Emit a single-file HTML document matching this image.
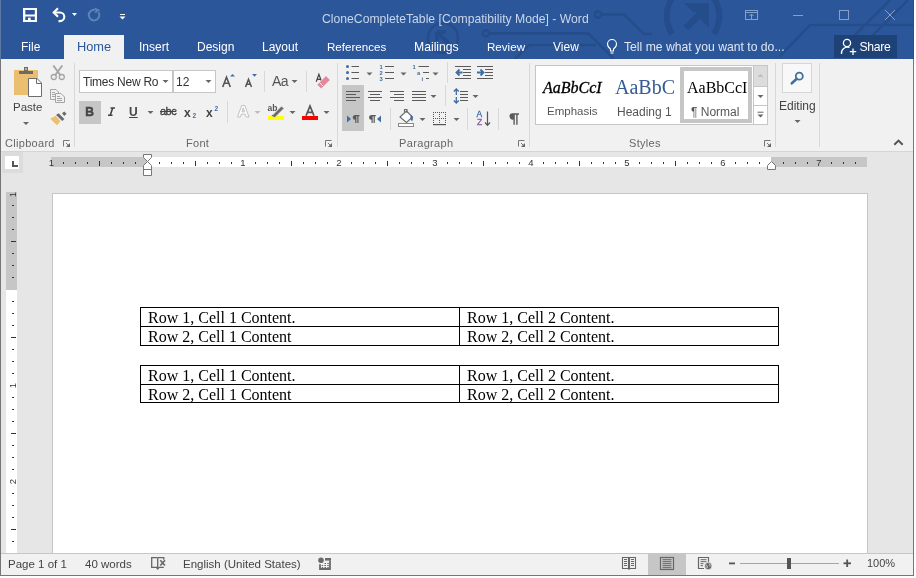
<!DOCTYPE html>
<html><head><meta charset="utf-8">
<style>
*{margin:0;padding:0;box-sizing:border-box}
html,body{width:916px;height:578px;overflow:hidden;background:#fff;font-family:"Liberation Sans",sans-serif;-webkit-font-smoothing:antialiased}
td span{position:relative;top:1px}
.a{position:absolute}
#win{will-change:transform;position:absolute;left:0;top:0;width:916px;height:578px;background:#e6e6e6;overflow:hidden}
.bd{position:absolute;background:#767676}
#title{position:absolute;left:0;top:0;width:913px;height:59px;background:#2b579a}
.tt{position:absolute;top:0;font-size:12.5px;color:#fff;white-space:nowrap;line-height:1}
#ribbon{position:absolute;left:0;top:59px;width:913px;height:93px;background:#f1f1f1;border-bottom:1px solid #d5d5d5}
.sep{position:absolute;width:1px;background:#d9d9d9}
.gl{position:absolute;top:80px;font-size:11.5px;color:#444;white-space:nowrap;line-height:1}
.rt{position:absolute;font-size:11.5px;color:#444;white-space:nowrap;line-height:1}
.dd{position:absolute;width:0;height:0;border-left:3px solid transparent;border-right:3px solid transparent;border-top:3px solid #555}
#status{position:absolute;left:0;top:553px;width:913px;height:22px;background:#f1f1f1;border-top:1px solid #c6c6c6}
.st{position:absolute;top:5px;font-size:11.5px;color:#444;white-space:nowrap;line-height:1}
#page{position:absolute;left:52px;top:193px;width:816px;height:400px;background:#fff;border:1px solid #c6c6c6}
table{position:absolute;border-collapse:collapse;font-family:"Liberation Serif",serif;font-size:16px;color:#000}
td{border:1px solid #000;padding:0 0 0 7px;height:19px;line-height:17px;vertical-align:top;white-space:nowrap}
</style></head><body>
<div id="win">
  <div id="title">

    <svg class="a" style="left:0;top:0" width="916" height="59" viewBox="0 0 916 59">
      <g fill="none" stroke="#254d8b" stroke-width="2.6">
        <circle cx="598" cy="14.5" r="3.2"/>
        <path d="M601.2 14.5H624L644 34H652"/>
        <circle cx="486" cy="33.4" r="3.2"/>
        <path d="M489.2 33.4H588L614 59"/>
        <path d="M514 60L529 45H596"/>
        <circle cx="443" cy="38" r="15"/>
        <path d="M437 32L451 46M437 32V41M437 32H446" stroke-width="4"/>
        <path d="M780 56L810 25H916M850 40L890 0M868 40L908 0" stroke-width="2.6"/>
        
      </g>
      <g fill="none" stroke="#254d8b" stroke-width="6">
        <path d="M673 -4Q661 15 672 34"/>
        <path d="M713 -4Q725 15 714 34"/>
        <path d="M686 28L704 10" stroke-width="6.5"/>
      </g>
      <path d="M684 3H709V28L700 19V12H693Z" fill="#254d8b"/>
    </svg>
    <div class="tt" style="left:322px;top:13px;font-size:12.2px;color:#c9d6ea">CloneCompleteTable [Compatibility Mode] - Word</div>
    <!-- tabs -->
    <div class="a" style="left:64px;top:35px;width:60px;height:24px;background:#f1f1f1"></div>
    <div class="tt" style="left:21px;top:41px;font-size:12px">File</div>
    <div class="tt" style="left:77px;top:41px;font-size:12.8px;color:#2b579a">Home</div>
    <div class="tt" style="left:139px;top:41px;font-size:12px">Insert</div>
    <div class="tt" style="left:197px;top:41px;font-size:12px">Design</div>
    <div class="tt" style="left:262px;top:41px;font-size:12px">Layout</div>
    <div class="tt" style="left:327px;top:41px;font-size:11.6px">References</div>
    <div class="tt" style="left:414px;top:41px;font-size:12.2px">Mailings</div>
    <div class="tt" style="left:487px;top:41px;font-size:11.6px">Review</div>
    <div class="tt" style="left:553px;top:41px;font-size:12px">View</div>
    <div class="tt" style="left:624px;top:41px;font-size:12.2px;color:#dfe6f1">Tell me what you want to do...</div>
    <div class="a" style="left:834px;top:35px;width:63px;height:23px;background:#1e4275"></div>
    <div class="tt" style="left:859.5px;top:41px;font-size:12.2px;letter-spacing:-0.3px">Share</div>
    <svg class="a" style="left:0;top:0" width="916" height="59" viewBox="0 0 916 59">
      <!-- save -->
      <path d="M23 8H37V22H23Z" fill="#fff"/>
      <rect x="25.3" y="10" width="9.5" height="4.5" fill="#2b579a"/>
      <rect x="25.3" y="16.5" width="9.5" height="3.5" fill="#2b579a"/>
      <rect x="28" y="17.7" width="2.7" height="2.3" fill="#fff"/>
      <!-- undo -->
      <path d="M54 12.5H60A4.3 4.3 0 0 1 60 21.1H58.5" fill="none" stroke="#fff" stroke-width="2.1"/>
      <path d="M58 8.3L53.7 12.5L58 16.7" fill="none" stroke="#fff" stroke-width="2.1"/>
      <path d="M72 13h5l-2.5 3z" fill="#fff"/>
      <!-- redo disabled -->
      <path d="M98.6 12.3A5.3 5.3 0 1 1 95.2 9.9" fill="none" stroke="#5f82b8" stroke-width="2"/>
      <path d="M95 8.2L97.5 10.3L95.2 12.6M97.5 10.3H99.6" fill="none" stroke="#5f82b8" stroke-width="2"/>
      <!-- customize -->
      <rect x="120" y="14" width="5" height="1" fill="#fff"/>
      <path d="M119.5 16.5h6l-3 3z" fill="#fff"/>
      <!-- window controls -->
      <g fill="none" stroke="#86a0cc" stroke-width="1">
        <rect x="745.5" y="10.5" width="12" height="9"/>
        <path d="M745.5 12.5H757.5M751.5 19V14M749.5 16L751.5 14L753.5 16"/>
        <path d="M793 15.5H803"/>
        <rect x="839.5" y="10.5" width="9" height="9"/>
        <path d="M885 10L895 20M895 10L885 20"/>
      </g>
      <!-- lightbulb -->
      <g fill="none" stroke="#fff" stroke-width="1.1">
        <path d="M610.5 51V49Q607.5 47 607.5 44A4.5 4.5 0 0 1 616.5 44Q616.5 47 613.5 49V51Z"/>
        <path d="M610.5 53H613.5"/>
      </g>
      <!-- share person -->
      <g fill="none" stroke="#fff" stroke-width="1.3">
        <circle cx="847" cy="43" r="3.6"/>
        <path d="M841.5 54A6 6 0 0 1 849.5 47.5"/>
        <path d="M853 48.5V55M849.8 51.7H856.2"/>
      </g>
    </svg>
  </div>
  <div id="ribbon">
  </div>

  <!-- ===== RIBBON ICONS ===== -->
  <svg class="a" style="left:0;top:0" width="916" height="578" viewBox="0 0 916 578">
    <!-- separators -->
    <g fill="#d8d8d8">
      <rect x="74" y="63" width="1" height="84"/>
      <rect x="337" y="63" width="1" height="84"/>
      <rect x="529" y="63" width="1" height="84"/>
      <rect x="775" y="63" width="1" height="84"/>
      <rect x="819" y="63" width="1" height="84"/>
      <rect x="264" y="71" width="1" height="21"/>
      <rect x="306" y="71" width="1" height="21"/>
      <rect x="227" y="101" width="1" height="22"/>
      <rect x="447" y="62" width="1" height="21"/>
      <rect x="445" y="85" width="1" height="21"/>
      <rect x="390" y="108" width="1" height="22"/>
      <rect x="467" y="108" width="1" height="22"/>
      <rect x="498" y="108" width="1" height="22"/>
    </g>
    <!-- Paste -->
    <rect x="14" y="70" width="24" height="25" fill="#eabf6f"/>
    <rect x="19" y="71" width="14" height="3" fill="#6b6b6b"/>
    <rect x="24" y="67" width="4" height="5" fill="#6b6b6b"/>
    <rect x="25.3" y="68.3" width="1.4" height="1.4" fill="#fff"/>
    <path d="M28.5 78.5H37L41.5 83V96.5H28.5Z" fill="#fff" stroke="#6d6d6d"/>
    <path d="M36.5 78.5V83.5H41.5" fill="none" stroke="#6d6d6d"/>
    <path d="M23 122h6l-3 3z" fill="#666"/>
    <!-- scissors -->
    <g fill="none" stroke="#a4a4a4" stroke-width="1.3">
      <circle cx="53.8" cy="77" r="2.5"/><circle cx="61.8" cy="77" r="2.5"/>
      <path d="M55.5 74.8L62.3 65.5M60.1 74.8L53.3 65.5" stroke-width="1.9"/>
    </g>
    <!-- copy -->
    <g fill="#f1f1f1" stroke="#a4a4a4" stroke-width="1">
      <path d="M50.5 89.5H56L58.5 92V99.5H50.5Z"/>
      <path d="M55.5 93.5H61L64.5 97V102.5H55.5Z"/>
      <path d="M52 92.5h3M52 94.5h4M52 96.5h3M57 96.5h3M57 98.5h5M57 100.5h5"/>
    </g>
    <!-- format painter -->
    <path d="M50.2 118.8L55.5 115.8L60.5 121.2L57 125.3Z" fill="#eabf6f"/>
    <path d="M56 115L58.6 113.3L64.4 119L62.3 120.9Z" fill="#6b6b6b"/>
    <path d="M62 113.2L64.3 111.4L66.6 113.8L64.3 116Z" fill="#6b6b6b"/>
    <!-- launchers -->
    <g fill="none" stroke="#777" stroke-width="1">
      <path d="M63.5 146.5V140.5H69.5 M66.0 143L68.5 145.5"/>
      <path d="M325.5 146.5V140.5H331.5 M328.0 143L330.5 145.5"/>
      <path d="M518.5 146.5V140.5H524.5 M521.0 143L523.5 145.5"/>
      <path d="M764.5 146.5V140.5H770.5 M767.0 143L769.5 145.5"/>
    </g>
    <g fill="#666">
      <path d="M66.0 147H70.0V143Z"/>
      <path d="M328.0 147H332.0V143Z"/>
      <path d="M521.0 147H525.0V143Z"/>
      <path d="M767.0 147H771.0V143Z"/>
    </g>
    <!-- font boxes -->
    <rect x="79.5" y="70.5" width="93" height="22" fill="#fff" stroke="#c6c6c6"/>
    <rect x="173.5" y="70.5" width="42" height="22" fill="#fff" stroke="#c6c6c6"/>
    <path d="M162.5 80h6l-3 3z" fill="#666"/>
    <path d="M205.5 80h6l-3 3z" fill="#666"/>
    <!-- grow/shrink triangles -->
    <path d="M230 76.5h5l-2.5-2.5z" fill="#3f6da6"/>
    <path d="M252 74h5l-2.5 2.7z" fill="#3f6da6"/>
    <path d="M291.5 80h6l-3 3z" fill="#666"/>
    <!-- clear formatting eraser -->
    <path d="M316.2 81.8L318.9 74.2L321.6 81.8M317.1 79.4H320.7" fill="none" stroke="#444" stroke-width="1.2"/>
    <path d="M316.6 84.7L325.5 75.8L330.1 80.4L321.2 89.3Z" fill="#f1f1f1"/>
    <path d="M317.4 84.7L326 76.1L329.8 79.9L321.2 88.5Z" fill="#e4889a"/>
    <path d="M319.4 82.4L323.5 86.5" stroke="#f1f1f1" stroke-width="1"/>
    <!-- B button bg -->
    <rect x="79" y="101" width="22" height="23" fill="#c6c6c6"/>
    <path d="M147.5 111h6l-3 3z" fill="#666"/>
    <!-- text effect arrow etc -->
    <path d="M254.5 111h6l-3 3z" fill="#bdbdbd"/>
    <path d="M289.5 111h6l-3 3z" fill="#666"/>
    <path d="M323.5 111h6l-3 3z" fill="#666"/>
    <!-- highlight -->
    <rect x="268" y="116" width="16" height="4" fill="#ffff00"/>
    
    <!-- font color -->
    <rect x="302" y="116" width="16" height="4" fill="#ff0000"/>
  </svg>
  <div class="rt" style="left:13px;top:102px;font-size:11.5px;color:#444">Paste</div>
  <div class="rt" style="left:5px;top:138px;font-size:11px;letter-spacing:0.3px;color:#666">Clipboard</div>
  <div class="rt" style="left:186px;top:138px;font-size:11px;letter-spacing:0.3px;color:#666">Font</div>
  <div class="rt" style="left:83px;top:76px;font-size:12px;letter-spacing:-0.25px;color:#333">Times New Ro</div>
  <div class="rt" style="left:176px;top:76px;font-size:12px;color:#333">12</div>
  
  
  <div class="rt" style="left:272px;top:74px;font-size:14px;letter-spacing:-0.5px;color:#555">Aa</div>
  
  <div class="rt" style="left:85.3px;top:106px;font-size:12px;font-weight:bold;color:#444;-webkit-text-stroke:0.5px #444">B</div>
  
  <div class="rt" style="left:129px;top:106px;font-size:12px;font-weight:bold;color:#444;text-decoration:underline">U</div>
  <div class="rt" style="left:160px;top:106px;font-size:11px;letter-spacing:-0.5px;color:#444;-webkit-text-stroke:0.35px #444;text-decoration:line-through">abc</div>
  <div class="rt" style="left:184px;top:107px;font-size:12px;font-weight:bold;color:#444">x</div>
  <div class="rt" style="left:192.5px;top:113px;font-size:6.5px;font-weight:bold;color:#3f6da6">2</div>
  <div class="rt" style="left:206px;top:107px;font-size:12px;font-weight:bold;color:#444">x</div>
  <div class="rt" style="left:214.5px;top:106px;font-size:6.5px;font-weight:bold;color:#3f6da6">2</div>
  
  <div class="rt" style="left:267.5px;top:104px;font-size:8.5px;font-weight:bold;color:#555">ab</div>
  

  <svg class="a" style="left:0;top:0" width="916" height="578" viewBox="0 0 916 578">
    <!-- align/ltr highlight -->
    <rect x="342" y="85" width="22" height="46" fill="#c6c6c6"/>
    <!-- bullets -->
    <g fill="#3f6a9f"><circle cx="347.5" cy="66.5" r="1.5"/><circle cx="347.5" cy="72.5" r="1.5"/><circle cx="347.5" cy="78.5" r="1.5"/></g>
    <g stroke="#5a5a5a" stroke-width="1.2">
      <path d="M351.5 66.5h7.5M351.5 72.5h7.5M351.5 78.5h7.5"/>
      <path d="M385 66.5h9M385 72.5h9M385 78.5h9"/>
      <path d="M418.5 66.5h10.5M423 72.5h6M426 78.5h3"/>
    </g>
    <g fill="#666">
      <path d="M366.5 72.5h6l-3 3z"/><path d="M400.5 72.5h6l-3 3z"/><path d="M432.5 72.5h6l-3 3z"/>
      <path d="M430.5 95h6l-3 3z"/><path d="M472.5 95h6l-3 3z"/>
      <path d="M419.5 118h6l-3 3z"/><path d="M453.5 118h6l-3 3z"/>
    </g>
    <!-- indents -->
    <g stroke="#5a5a5a" stroke-width="1.2">
      <path d="M455 66.5h16M463 69.5h8M463 72.5h8M463 75.5h8M455 78.5h16"/>
      <path d="M477 66.5h16M485 69.5h8M485 72.5h8M485 75.5h8M477 78.5h16"/>
    </g>
    <g fill="none" stroke="#3f6da6" stroke-width="1.8">
      <path d="M462.5 72.5H456.5M459.5 69.5L456.5 72.5L459.5 75.5"/>
      <path d="M477 72.5H483.5M480.5 69.5L483.5 72.5L480.5 75.5"/>
    </g>
    <!-- align -->
    <g stroke="#5a5a5a" stroke-width="1.2">
      <path d="M346 91.5h14M346 94.5h10M346 97.5h14M346 100.5h10"/>
      <path d="M368 91.5h14M370 94.5h10M368 97.5h14M370 100.5h10"/>
      <path d="M390 91.5h14M394 94.5h10M390 97.5h14M394 100.5h10"/>
      <path d="M412 91.5h14M412 94.5h14M412 97.5h14M412 100.5h14"/>
      <path d="M460 91.5h8M460 94.5h8M460 97.5h8M460 100.5h8"/>
    </g>
    <!-- line spacing arrows -->
    <g fill="none" stroke="#3f6da6" stroke-width="1.3">
      <path d="M456.3 89V95M453.8 91.5L456.3 89L458.8 91.5"/>
      <path d="M456.3 97V103M453.8 100.5L456.3 103L458.8 100.5"/>
    </g>
    <!-- ltr / rtl -->
    <path d="M347 115.5L351 119L347 122.5Z" fill="#3f6da6"/>
    <path d="M381 115.5L377 119L381 122.5Z" fill="#3f6da6"/>
    <g fill="#5a5a5a">
      <path d="M355 115H359.5V116.3H358.5V123H357.3V116.3H356.4V123H355.2V119.8A2.4 2.4 0 0 1 355 115Z"/>
      <path d="M371.3 115H375.8V116.3H374.8V123H373.6V116.3H372.7V123H371.5V119.8A2.4 2.4 0 0 1 371.3 115Z"/>
      <path d="M512 113.3H519V114.8H517.6V124.7H516.2V114.8H514.8V124.7H513.4V119.5A3.1 3.1 0 0 1 512 113.3Z"/>
    </g>
    <!-- shading -->
    <path d="M400 117L406.5 111L412.5 117L406.5 122.5Z" fill="#fff" stroke="#6b6b6b" stroke-width="1.1"/>
    <path d="M404.5 112.5V109.5H407V113" fill="none" stroke="#6b6b6b" stroke-width="1.1"/>
    <path d="M410.5 114.5Q414.5 117 412 121.5L410.5 119Z" fill="#3f6da6"/>
    <rect x="398.5" y="123.5" width="15" height="3" fill="#fff" stroke="#8a8a8a"/>
    <!-- borders -->
    <g fill="#555">
      <rect x="433" y="112" width="1" height="1"/><rect x="435" y="112" width="1" height="1"/><rect x="437" y="112" width="1" height="1"/><rect x="439" y="112" width="1" height="1"/><rect x="441" y="112" width="1" height="1"/><rect x="443" y="112" width="1" height="1"/><rect x="445" y="112" width="1" height="1"/>
      <rect x="433" y="118" width="1" height="1"/><rect x="435" y="118" width="1" height="1"/><rect x="437" y="118" width="1" height="1"/><rect x="439" y="118" width="1" height="1"/><rect x="441" y="118" width="1" height="1"/><rect x="443" y="118" width="1" height="1"/><rect x="445" y="118" width="1" height="1"/>
      <rect x="433" y="114" width="1" height="1"/><rect x="433" y="116" width="1" height="1"/><rect x="433" y="120" width="1" height="1"/><rect x="433" y="122" width="1" height="1"/>
      <rect x="439" y="114" width="1" height="1"/><rect x="439" y="116" width="1" height="1"/><rect x="439" y="120" width="1" height="1"/><rect x="439" y="122" width="1" height="1"/>
      <rect x="445" y="114" width="1" height="1"/><rect x="445" y="116" width="1" height="1"/><rect x="445" y="120" width="1" height="1"/><rect x="445" y="122" width="1" height="1"/>
      <rect x="433" y="124" width="13" height="1.2" fill="#555"/>
    </g>
    <!-- sort -->
    <path d="M487.5 111.5V125M485 122.5L487.5 125.3L490 122.5" fill="none" stroke="#555" stroke-width="1.2"/>
  </svg>
  <div class="rt" style="left:379.5px;top:64px;font-size:5.8px;font-weight:bold;color:#3f6a9f;line-height:6px">1<br>2<br>3</div>
  <div class="rt" style="left:412.5px;top:64px;font-size:5.8px;font-weight:bold;color:#3f6a9f;line-height:6px">1</div>
  <div class="rt" style="left:417px;top:70px;font-size:5.8px;font-weight:bold;color:#3f6a9f;line-height:6px">a</div>
  <div class="rt" style="left:421.5px;top:76px;font-size:5.8px;font-weight:bold;color:#3f6a9f;line-height:6px">i</div>
  <div class="rt" style="left:476.5px;top:110px;font-size:8.5px;color:#3f6da6;-webkit-text-stroke:0.3px #3f6da6">A</div>
  <div class="rt" style="left:477px;top:118px;font-size:8.5px;color:#8e5db0;-webkit-text-stroke:0.3px #8e5db0">Z</div>
  <div class="rt" style="left:399px;top:138px;font-size:11px;letter-spacing:0.35px;color:#666">Paragraph</div>

  <svg class="a" style="left:0;top:0" width="916" height="578" viewBox="0 0 916 578">
    <rect x="535.5" y="65.5" width="232" height="59" fill="#fff" stroke="#c6c6c6"/>
    <rect x="682" y="69" width="68" height="52" fill="#fff" stroke="#c6c6c6" stroke-width="4"/>
    <rect x="753.5" y="65.5" width="14" height="21" fill="#dcdcdc" stroke="#c6c6c6"/>
    <rect x="753.5" y="86.5" width="14" height="19" fill="#fff" stroke="#c6c6c6"/>
    <rect x="753.5" y="105.5" width="14" height="19" fill="#fff" stroke="#c6c6c6"/>
    <path d="M757.5 77h6l-3 -3z" fill="#bdbdbd"/>
    <path d="M757.5 95h6l-3 3z" fill="#666"/>
    <path d="M757.5 114.5h6l-3 3z" fill="#666"/>
    <rect x="757.5" y="111.7" width="6" height="1" fill="#666"/>
    <!-- editing -->
    <rect x="782.5" y="63.5" width="29" height="29" fill="#f8f8f8" stroke="#d6d6d6"/>
    <circle cx="799.3" cy="76.2" r="3.5" fill="none" stroke="#41709f" stroke-width="1.8"/>
    <path d="M796.8 78.8L791.8 83.3" stroke="#41709f" stroke-width="2.6" stroke-linecap="round"/>
    <path d="M794.5 120h6l-3 3z" fill="#666"/>
    <path d="M894.3 144.8L898.5 140.6L902.7 144.8" fill="none" stroke="#555" stroke-width="2"/>
  </svg>
  <div class="rt" style="left:543px;top:80px;font-size:16px;font-style:italic;font-family:'Liberation Serif',serif;color:#000;-webkit-text-stroke:0.3px #000">AaBbCcI</div>
  <div class="rt" style="left:615px;top:77px;font-size:20px;font-family:'Liberation Serif',serif;color:#345b92">AaBbC</div>
  <div class="rt" style="left:687px;top:80px;font-size:16px;font-family:'Liberation Serif',serif;color:#000">AaBbCcI</div>
  <div class="rt" style="left:547px;top:106px;font-size:11.5px;color:#555">Emphasis</div>
  <div class="rt" style="left:617px;top:106px;font-size:12px;color:#555">Heading 1</div>
  <div class="rt" style="left:691px;top:106px;font-size:12px;color:#555">&para; Normal</div>
  <div class="rt" style="left:629px;top:138px;font-size:11px;letter-spacing:0.3px;color:#666">Styles</div>
  <div class="rt" style="left:779px;top:100px;font-size:12px;color:#444">Editing</div>

  <svg class="a" style="left:0;top:0" width="916" height="578" viewBox="0 0 916 578">
    <path d="M222.7 87L226.5 77.2L230.3 87M224.2 83.3H228.8" fill="none" stroke="#555" stroke-width="1.6"/>
    <path d="M245.5 87L248.5 79.4L251.5 87M246.7 84.3H250.3" fill="none" stroke="#555" stroke-width="1.5"/>
    <path d="M110.5 108H115M108 115.3H112.5M112.7 108L110.2 115.3" fill="none" stroke="#444" stroke-width="1.6"/>
    <path d="M306 115.8L310 106L314 115.8M307.4 112.3H312.6" fill="none" stroke="#555" stroke-width="1.7"/>
    <path d="M237.5 117L241.6 105.5H244.9L249 117H246.2L245.2 114.2H241.3L240.3 117ZM242 111.8H244.5L243.25 107.8Z" fill="#fbfbfb" stroke="#c2c2c2" stroke-width="1" fill-rule="evenodd"/>
    <path d="M272 115.5L281.5 106L284 108.5L274.5 118Z" fill="#6b6b6b" stroke="#f1f1f1" stroke-width="0.8"/>
    <path d="M271.5 116L272.2 114.8L273.8 116.4Z" fill="#6b6b6b"/>
  </svg>
  <!-- ruler -->
  <div class="a" style="left:2px;top:152px;width:21px;height:21px;background:#dcdcdc"></div>
  <div class="a" style="left:5px;top:156px;width:14px;height:13px;background:#fff"></div>
  <div class="a" style="left:12px;top:161px;width:2px;height:6px;background:#555"></div>
  <div class="a" style="left:12px;top:165px;width:6px;height:2px;background:#555"></div>
  <svg class="a" style="left:0;top:0" width="916" height="578" viewBox="0 0 916 578">
    <rect x="51" y="157" width="816" height="10" fill="#c6c6c6"/>
    <rect x="147" y="157" width="624" height="10" fill="#fff"/>
    <g fill="#333"><rect x="63" y="162" width="1" height="2"/><rect x="75" y="162" width="1" height="2"/><rect x="87" y="162" width="1" height="2"/><rect x="99" y="161" width="1" height="5"/><rect x="111" y="162" width="1" height="2"/><rect x="123" y="162" width="1" height="2"/><rect x="135" y="162" width="1" height="2"/><rect x="159" y="162" width="1" height="2"/><rect x="171" y="162" width="1" height="2"/><rect x="183" y="162" width="1" height="2"/><rect x="195" y="161" width="1" height="5"/><rect x="207" y="162" width="1" height="2"/><rect x="219" y="162" width="1" height="2"/><rect x="231" y="162" width="1" height="2"/><rect x="255" y="162" width="1" height="2"/><rect x="267" y="162" width="1" height="2"/><rect x="279" y="162" width="1" height="2"/><rect x="291" y="161" width="1" height="5"/><rect x="303" y="162" width="1" height="2"/><rect x="315" y="162" width="1" height="2"/><rect x="327" y="162" width="1" height="2"/><rect x="351" y="162" width="1" height="2"/><rect x="363" y="162" width="1" height="2"/><rect x="375" y="162" width="1" height="2"/><rect x="387" y="161" width="1" height="5"/><rect x="399" y="162" width="1" height="2"/><rect x="411" y="162" width="1" height="2"/><rect x="423" y="162" width="1" height="2"/><rect x="447" y="162" width="1" height="2"/><rect x="459" y="162" width="1" height="2"/><rect x="471" y="162" width="1" height="2"/><rect x="483" y="161" width="1" height="5"/><rect x="495" y="162" width="1" height="2"/><rect x="507" y="162" width="1" height="2"/><rect x="519" y="162" width="1" height="2"/><rect x="543" y="162" width="1" height="2"/><rect x="555" y="162" width="1" height="2"/><rect x="567" y="162" width="1" height="2"/><rect x="579" y="161" width="1" height="5"/><rect x="591" y="162" width="1" height="2"/><rect x="603" y="162" width="1" height="2"/><rect x="615" y="162" width="1" height="2"/><rect x="639" y="162" width="1" height="2"/><rect x="651" y="162" width="1" height="2"/><rect x="663" y="162" width="1" height="2"/><rect x="675" y="161" width="1" height="5"/><rect x="687" y="162" width="1" height="2"/><rect x="699" y="162" width="1" height="2"/><rect x="711" y="162" width="1" height="2"/><rect x="735" y="162" width="1" height="2"/><rect x="747" y="162" width="1" height="2"/><rect x="759" y="162" width="1" height="2"/><rect x="783" y="162" width="1" height="2"/><rect x="795" y="162" width="1" height="2"/><rect x="807" y="162" width="1" height="2"/><rect x="831" y="162" width="1" height="2"/><rect x="843" y="162" width="1" height="2"/><rect x="855" y="162" width="1" height="2"/></g>
    <text x="243" y="166" font-size="9.5" font-family="Liberation Sans" fill="#333" text-anchor="middle">1</text>
    <text x="339" y="166" font-size="9.5" font-family="Liberation Sans" fill="#333" text-anchor="middle">2</text>
    <text x="435" y="166" font-size="9.5" font-family="Liberation Sans" fill="#333" text-anchor="middle">3</text>
    <text x="531" y="166" font-size="9.5" font-family="Liberation Sans" fill="#333" text-anchor="middle">4</text>
    <text x="627" y="166" font-size="9.5" font-family="Liberation Sans" fill="#333" text-anchor="middle">5</text>
    <text x="723" y="166" font-size="9.5" font-family="Liberation Sans" fill="#333" text-anchor="middle">6</text>
    <text x="819" y="166" font-size="9.5" font-family="Liberation Sans" fill="#333" text-anchor="middle">7</text>
    <text x="51.5" y="166" font-size="9.5" font-family="Liberation Sans" fill="#333" text-anchor="middle">1</text>
    <path d="M143.5 154.5H151.5V157.5L147.5 161.5L151.5 165.5V175.5H143.5V165.5L147.5 161.5L143.5 157.5Z" fill="#fff" stroke="#777"/>
    <path d="M143.5 169.5H151.5" stroke="#777"/>
    <path d="M767.5 169.5V165.5L771.5 161.5L775.5 165.5V169.5Z" fill="#fff" stroke="#777"/>
    <rect x="6" y="192" width="11" height="361" fill="#fff"/>
    <rect x="6" y="192" width="11" height="98" fill="#c6c6c6"/>
    <g fill="#333"><rect x="12" y="205" width="2" height="1"/><rect x="12" y="217" width="2" height="1"/><rect x="12" y="229" width="2" height="1"/><rect x="11" y="241" width="5" height="1"/><rect x="12" y="253" width="2" height="1"/><rect x="12" y="265" width="2" height="1"/><rect x="12" y="277" width="2" height="1"/><rect x="12" y="301" width="2" height="1"/><rect x="12" y="313" width="2" height="1"/><rect x="12" y="325" width="2" height="1"/><rect x="11" y="337" width="5" height="1"/><rect x="12" y="349" width="2" height="1"/><rect x="12" y="361" width="2" height="1"/><rect x="12" y="373" width="2" height="1"/><rect x="12" y="397" width="2" height="1"/><rect x="12" y="409" width="2" height="1"/><rect x="12" y="421" width="2" height="1"/><rect x="11" y="433" width="5" height="1"/><rect x="12" y="445" width="2" height="1"/><rect x="12" y="457" width="2" height="1"/><rect x="12" y="469" width="2" height="1"/><rect x="12" y="493" width="2" height="1"/><rect x="12" y="505" width="2" height="1"/><rect x="12" y="517" width="2" height="1"/><rect x="11" y="529" width="5" height="1"/><rect x="12" y="541" width="2" height="1"/></g>
    <text x="0" y="0" font-size="9.5" font-family="Liberation Sans" fill="#333" text-anchor="middle" transform="translate(16 385.5) rotate(-90)">1</text>
    <text x="0" y="0" font-size="9.5" font-family="Liberation Sans" fill="#333" text-anchor="middle" transform="translate(16 481.5) rotate(-90)">2</text>
    <text x="0" y="0" font-size="9.5" font-family="Liberation Sans" fill="#333" text-anchor="middle" transform="translate(16 194.5) rotate(-90)">1</text>
  </svg>
  <div id="page">
  </div>
  <table style="left:140px;top:307px;width:639px">
    <tr><td style="width:319px"><span>Row 1, Cell 1 Content.</span></td><td><span>Row 1, Cell 2 Content.</span></td></tr>
    <tr><td><span>Row 2, Cell 1 Content</span></td><td><span>Row 2, Cell 2 Content.</span></td></tr>
  </table>
  <table style="left:140px;top:365px;width:639px">
    <tr><td style="width:319px"><span>Row 1, Cell 1 Content.</span></td><td><span>Row 1, Cell 2 Content.</span></td></tr>
    <tr style="height:18px"><td style="height:18px"><span>Row 2, Cell 1 Content</span></td><td style="height:18px"><span>Row 2, Cell 2 Content.</span></td></tr>
  </table>
  <div id="status">

    <svg class="a" style="left:0;top:-1px" width="916" height="22" viewBox="0 553 916 22">
      <!-- proofing -->
      <g fill="none" stroke="#666" stroke-width="1.3">
        <path d="M157.5 557.7H151.7V567.3H157.5"/>
        <path d="M157.7 557.5V569"/>
        <path d="M158 557.7H163.8V559.7M158.5 567.3H163.8"/>
      </g>
      <path d="M155.7 567.5L157.7 570L159.7 567.5Z" fill="#666"/>
      <path d="M160.3 560.3L165 565.5M165 560.3L160.3 565.5" stroke="#666" stroke-width="1.6"/>
      <!-- macro -->
      <circle cx="321" cy="560.2" r="2.8" fill="#6b6b6b"/>
      <rect x="325" y="558" width="6" height="2.6" fill="#6b6b6b"/>
      <path d="M320 564.2V569H330V560.5" fill="none" stroke="#6b6b6b" stroke-width="1.8"/>
      <g fill="#6b6b6b"><rect x="324.5" y="563" width="1.5" height="1"/><rect x="327.3" y="563" width="1.5" height="1"/><rect x="321.7" y="565" width="1.5" height="1"/><rect x="324.5" y="565" width="1.5" height="1"/><rect x="327.3" y="565" width="1.5" height="1"/><rect x="321.7" y="567" width="1.5" height="1"/><rect x="324.5" y="567" width="1.5" height="1"/><rect x="327.3" y="567" width="1.5" height="1"/></g>
      <!-- print layout highlight -->
      <rect x="648" y="554" width="38" height="21" fill="#c6c6c6"/>
      <!-- read mode -->
      <g fill="none" stroke="#666" stroke-width="1.1">
        <path d="M622.5 557.5H628.5V568.5H622.5ZM629.5 557.5H635.5V568.5H629.5Z"/>
        <path d="M624 559.5H627M624 561.5H627M624 563.5H627M624 565.5H627M631 559.5H634M631 561.5H634M631 563.5H634M631 565.5H634"/>
        <path d="M629 557V570"/>
      </g>
      <!-- print layout -->
      <rect x="660.5" y="557.5" width="13" height="12" fill="none" stroke="#666" stroke-width="1.2"/>
      <path d="M662.5 559.7H671.5M662.5 561.7H671.5M662.5 563.7H671.5M662.5 565.7H671.5M662.5 567.7H671.5" stroke="#666" stroke-width="1"/>
      <!-- web layout -->
      <path d="M708.5 563V557.5H698.5V568.5H704" fill="none" stroke="#666" stroke-width="1.2"/>
      <path d="M700.5 559.7H706.5M700.5 561.7H706.5M700.5 563.7H703.5M700.5 565.7H703" stroke="#666" stroke-width="1"/>
      <circle cx="708.3" cy="566" r="3.7" fill="#666" stroke="#f1f1f1" stroke-width="0.8"/>
      <path d="M706 564.5Q708 566 707 568M709 563.5Q710.5 565 710 566.5" stroke="#f1f1f1" stroke-width="0.8" fill="none"/>
      <!-- zoom slider -->
      <rect x="729" y="562.5" width="6" height="1.8" fill="#555"/>
      <rect x="740" y="563" width="99" height="1" fill="#a6a6a6"/>
      <rect x="787" y="558" width="4" height="11" fill="#555"/>
      <rect x="843.5" y="562.4" width="7.5" height="1.8" fill="#555"/>
      <rect x="846.3" y="559.5" width="1.8" height="7.5" fill="#555"/>
    </svg>
    <div class="st" style="left:8px">Page 1 of 1</div>
    <div class="st" style="left:85px">40 words</div>
    <div class="st" style="left:183px">English (United States)</div>
    <div class="st" style="left:867px;top:4px;font-size:11px">100%</div>
  </div>
  <div class="bd" style="left:0;top:59px;width:1px;height:517px"></div>
  <div class="bd" style="left:913px;top:59px;width:1px;height:517px"></div>
  <div class="a" style="left:0;top:0;width:1px;height:59px;background:#5d78a4"></div>
  <div class="a" style="left:913px;top:0;width:1px;height:59px;background:#284f8b"></div>
  <div class="bd" style="left:0;top:575px;width:914px;height:1px"></div>
  <div class="a" style="left:914px;top:0;width:2px;height:578px;background:#fff"></div>
  <div class="a" style="left:0;top:576px;width:916px;height:2px;background:#fff"></div>
</div>
</body></html>
